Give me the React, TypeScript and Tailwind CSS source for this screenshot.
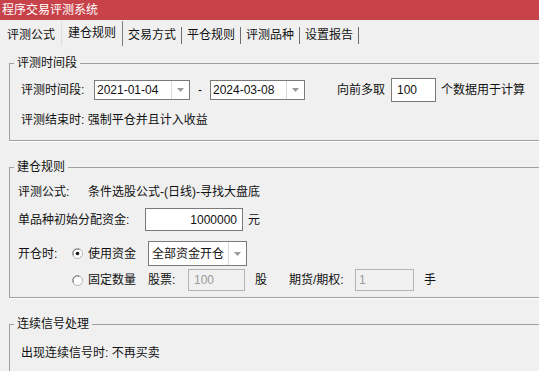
import type { ReactNode } from "react";

const Arrow = () => (
  <svg width="7" height="4" viewBox="0 0 7 4">
    <path d="M0 0 L7 0 L3.5 4 Z" fill="#9a9a9a" />
  </svg>
);

const Combo = ({ value, className }: { value: string; className: string }) => (
  <div className={`flex border border-[#7a7a7a] bg-white ${className}`}>
    <span className="flex flex-1 items-center pl-[2px] leading-none">{value}</span>
    <div className="flex w-[18px] items-center justify-center border-l border-[#d9d9d9]">
      <Arrow />
    </div>
  </div>
);

const Radio = ({ checked }: { checked?: boolean }) => (
  <svg width="11" height="11" viewBox="0 0 11 11" className="shrink-0">
    <circle cx="5.5" cy="5.5" r="5" fill="#fff" stroke="#b0b0b0" />
    <path d="M1.6 7.5 A4.3 4.3 0 0 1 7.5 1.6" fill="none" stroke="#7a7a7a" />
    {checked && <circle cx="5.5" cy="5.5" r="1.8" fill="#1a1a1a" />}
  </svg>
);

const Group = ({ title, children, className }: { title: string; children: ReactNode; className: string }) => (
  <fieldset
    className={`w-[560px] border border-[#a0a0a0] shadow-[0_1px_0_#fff] ${className}`}
  >
    <legend className="ml-[4px] px-[3px] leading-[16px]">{title}</legend>
    {children}
  </fieldset>
);

const tabs = ["评测公式", "建仓规则", "交易方式", "平仓规则", "评测品种", "设置报告"];

export default function App() {
  return (
    <div className="h-[371px] w-[539px] overflow-hidden bg-[#f0f0f0] font-['Liberation_Sans','Noto_Sans_CJK_SC',sans-serif] text-[12px] text-[#111]">
      <div className="h-[20px] bg-[#c8424a] pl-[2px] leading-[21px] text-white">程序交易评测系统</div>

      <div className="flex h-[26px] items-end pl-[2px]">
        {tabs.map((t, i) =>
          i === 1 ? (
            <div
              key={t}
              className="h-[25px] border-r border-l border-[#7c7c7c] border-l-[#dedede] pl-[6px] pr-[6px] pt-[4px] leading-[16px]"
            >
              {t}
            </div>
          ) : (
            <div key={t} className="flex h-[22px] items-center pl-[5px]">
              <span className="leading-[16px]">{t}</span>
              <span className={`ml-[5px] h-[17px] w-px ${i === 0 ? "bg-transparent" : "bg-[#6e6e6e]"}`} />
            </div>
          )
        )}
      </div>

      <div className="pl-[9px]">
        <Group title="评测时间段" className="mt-[9px]">
          <div className="pl-[11px] pt-[7px] pb-[12px]">
            <div className="flex h-[24px] items-center">
              <span className="w-[73px]">评测时间段:</span>
              <Combo value="2021-01-04" className="h-[20px] w-[96px]" />
              <span className="w-[20px] text-center">-</span>
              <Combo value="2024-03-08" className="h-[20px] w-[95px]" />
              <span className="ml-[32px]">向前多取</span>
              <div className="ml-[6px] flex h-[24px] w-[45px] items-center border border-[#7a7a7a] bg-white pl-[5px]">
                100
              </div>
              <span className="ml-[5px]">个数据用于计算</span>
            </div>
            <div className="mt-[10px] leading-[16px]">评测结束时: 强制平仓并且计入收益</div>
          </div>
        </Group>

        <Group title="建仓规则" className="mt-[18px]">
          <div className="pl-[8px] pt-[9px] pb-[6px]">
            <div className="flex leading-[16px]">
              <span className="w-[70px]">评测公式:</span>
              <span>条件选股公式-(日线)-寻找大盘底</span>
            </div>
            <div className="mt-[8px] flex items-center">
              <span className="w-[127px]">单品种初始分配资金:</span>
              <div className="flex h-[23px] w-[98px] items-center justify-end border border-[#7a7a7a] bg-white pr-[5px]">
                1000000
              </div>
              <span className="ml-[5px]">元</span>
            </div>
            <div className="mt-[10px] flex items-center">
              <span className="w-[54px]">开仓时:</span>
              <Radio checked />
              <span className="ml-[5px] w-[48px]">使用资金</span>
              <Combo value="全部资金开仓" className="ml-[12px] h-[25px] w-[99px] pl-[1px]" />
            </div>
            <div className="mt-[3px] flex items-center">
              <span className="w-[54px]" />
              <Radio />
              <span className="ml-[5px] w-[48px]">固定数量</span>
              <span className="ml-[12px] w-[30px]">股票:</span>
              <div className="ml-[10px] flex h-[22px] w-[57px] items-center border border-[#b4b4b4] pl-[5px] text-[#9a9a9a]">
                100
              </div>
              <span className="ml-[10px]">股</span>
              <span className="ml-[22px] w-[56px]">期货/期权:</span>
              <div className="ml-[10px] flex h-[22px] w-[59px] items-center border border-[#b4b4b4] pl-[3px] text-[#9a9a9a]">
                1
              </div>
              <span className="ml-[10px]">手</span>
            </div>
          </div>
        </Group>

        <Group title="连续信号处理" className="mt-[18px]">
          <div className="pl-[11px] pt-[13px] pb-[20px] leading-[16px]">出现连续信号时: 不再买卖</div>
        </Group>
      </div>
    </div>
  );
}
